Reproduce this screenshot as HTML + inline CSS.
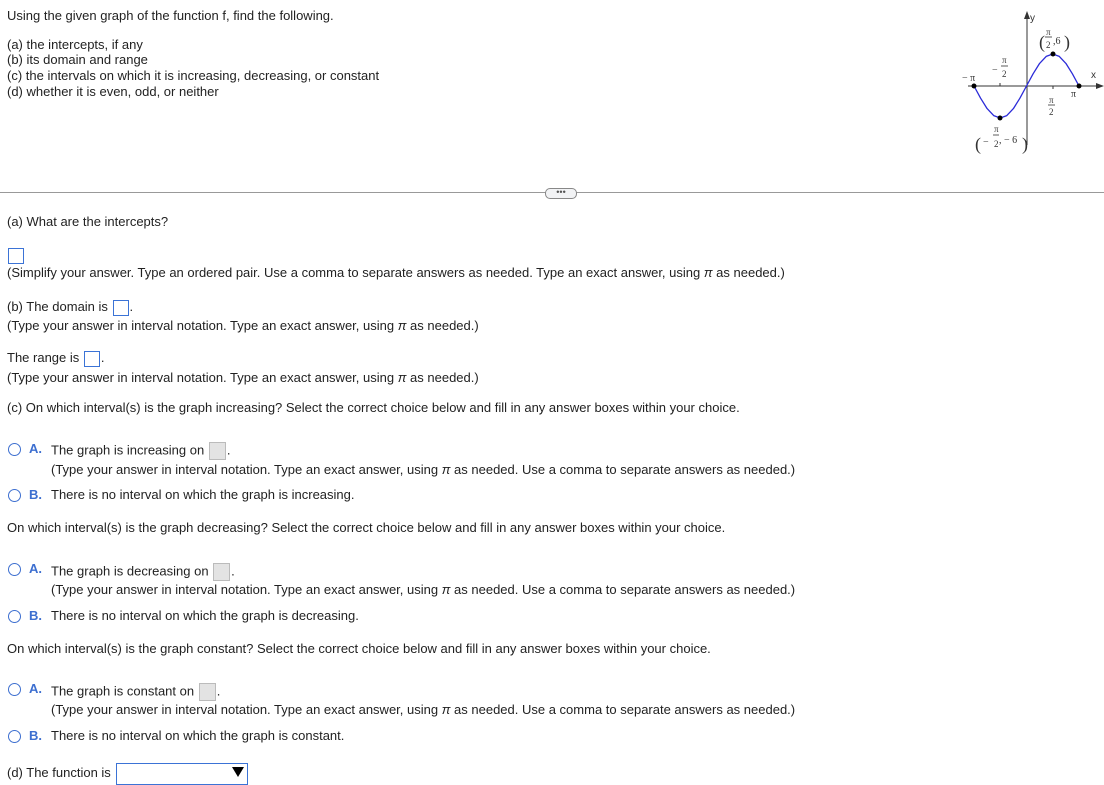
<!DOCTYPE html>
<html><head><meta charset="utf-8"><style>
body{margin:0;width:1104px;height:782px;overflow:hidden;background:#fff;font-family:"Liberation Sans",Arial,sans-serif;font-size:13px;color:#222;position:relative}
.t{position:absolute;line-height:14px;white-space:nowrap}
.box{display:inline-block;width:16px;height:16px;border:1px solid #3b73d6;vertical-align:middle;box-sizing:border-box;margin:0 1px}
.gb{display:inline-block;width:17px;height:18px;border:1px solid #bbb;background:#e3e3e3;vertical-align:middle;box-sizing:border-box;margin:0 1px}
.r{position:absolute;width:13px;height:13px;border:1.4px solid #3d6fd0;border-radius:50%;box-sizing:border-box}
.l{position:absolute;color:#3d6fd0;font-weight:bold;font-size:13px;line-height:14px}
</style></head><body>
<div class="t" style="left:7px;top:9px">Using the given graph of the function f, find the following.</div>
<div class="t" style="left:7px;top:38px">(a) the intercepts, if any</div>
<div class="t" style="left:7px;top:53px">(b) its domain and range</div>
<div class="t" style="left:7px;top:69px">(c) the intervals on which it is increasing, decreasing, or constant</div>
<div class="t" style="left:7px;top:85px">(d) whether it is even, odd, or neither</div>

<svg style="position:absolute;left:950px;top:5px" width="154" height="155" viewBox="0 0 154 155" font-family="Liberation Serif,serif" font-size="10" fill="#333">
<line x1="18" y1="81" x2="150" y2="81" stroke="#333" stroke-width="1"/>
<polygon points="154,81 146,78 146,84" fill="#333"/>
<line x1="77" y1="10" x2="77" y2="140" stroke="#333" stroke-width="1"/>
<polygon points="77,6 74,14 80,14" fill="#333"/>
<line x1="50" y1="78" x2="50" y2="81" stroke="#333"/><line x1="103" y1="81" x2="103" y2="84" stroke="#333"/>
<polyline points="24,81 30.6,93.2 37.1,103.6 43.7,110.6 50.25,113 56.8,110.6 63.4,103.6 69.9,93.2 76.5,81 83.1,68.8 89.6,58.4 96.2,51.4 102.75,49 109.3,51.4 115.9,58.4 122.4,68.8 129,81" fill="none" stroke="#2b2bd8" stroke-width="1.3" stroke-linejoin="round"/>
<circle cx="24" cy="81" r="2.5" fill="#000"/><circle cx="50" cy="113" r="2.5" fill="#000"/><circle cx="103" cy="49" r="2.5" fill="#000"/><circle cx="129" cy="81" r="2.5" fill="#000"/>
<text x="80" y="16" font-family="Liberation Sans,sans-serif">y</text>
<text x="141" y="73" font-family="Liberation Sans,sans-serif">x</text>
<text x="12" y="76">− π</text>
<text x="42" y="68">−</text><text x="52" y="58" font-size="9">π</text><line x1="51" y1="61" x2="58" y2="61" stroke="#333" stroke-width=".8"/><text x="52" y="72" font-size="9">2</text>
<text x="99" y="98" font-size="9">π</text><line x1="98" y1="100" x2="105" y2="100" stroke="#333" stroke-width=".8"/><text x="99" y="110" font-size="9">2</text>
<text x="121" y="92">π</text>
<text x="89" y="43" font-size="18">(</text><text x="96" y="30" font-size="9">π</text><line x1="95" y1="32" x2="102" y2="32" stroke="#333" stroke-width=".8"/><text x="96" y="43" font-size="9">2</text><text x="103" y="39">,6</text><text x="114" y="43" font-size="18">)</text>
<text x="25" y="145" font-size="18">(</text><text x="33" y="140">−</text><text x="44" y="127" font-size="9">π</text><line x1="43" y1="130" x2="49" y2="130" stroke="#333" stroke-width=".8"/><text x="44" y="142" font-size="9">2</text><text x="49" y="138">, − 6</text><text x="72" y="145" font-size="18">)</text>
</svg>

<div style="position:absolute;left:0;top:192px;width:1104px;height:1px;background:#999"></div>
<div style="position:absolute;left:545px;top:188px;width:30px;height:9px;border:1px solid #888;border-radius:5px;background:#f2f3f5;font-size:9px;line-height:6px;text-align:center;color:#555">•••</div>

<div class="t" style="left:7px;top:215px">(a) What are the intercepts?</div>
<div style="position:absolute;left:8px;top:248px;width:16px;height:16px;border:1px solid #3b73d6;box-sizing:border-box"></div>
<div class="t" style="left:7px;top:266px">(Simplify your answer. Type an ordered pair. Use a comma to separate answers as needed. Type an exact answer, using <i>π</i> as needed.)</div>
<div class="t" style="left:7px;top:299px;line-height:16px">(b) The domain is <span class="box"></span>.</div>
<div class="t" style="left:7px;top:319px">(Type your answer in interval notation. Type an exact answer, using <i>π</i> as needed.)</div>
<div class="t" style="left:7px;top:350px;line-height:16px">The range is <span class="box"></span>.</div>
<div class="t" style="left:7px;top:371px">(Type your answer in interval notation. Type an exact answer, using <i>π</i> as needed.)</div>
<div class="t" style="left:7px;top:401px">(c) On which interval(s) is the graph increasing? Select the correct choice below and fill in any answer boxes within your choice.</div>

<div class="r" style="left:8px;top:443px"></div><div class="l" style="left:29px;top:442px">A.</div>
<div class="t" style="left:51px;top:442px;line-height:16px">The graph is increasing on <span class="gb"></span>.</div>
<div class="t" style="left:51px;top:463px">(Type your answer in interval notation. Type an exact answer, using <i>π</i> as needed. Use a comma to separate answers as needed.)</div>
<div class="r" style="left:8px;top:489px"></div><div class="l" style="left:29px;top:488px">B.</div>
<div class="t" style="left:51px;top:488px">There is no interval on which the graph is increasing.</div>
<div class="t" style="left:7px;top:521px">On which interval(s) is the graph decreasing? Select the correct choice below and fill in any answer boxes within your choice.</div>

<div class="r" style="left:8px;top:563px"></div><div class="l" style="left:29px;top:562px">A.</div>
<div class="t" style="left:51px;top:563px;line-height:16px">The graph is decreasing on <span class="gb"></span>.</div>
<div class="t" style="left:51px;top:583px">(Type your answer in interval notation. Type an exact answer, using <i>π</i> as needed. Use a comma to separate answers as needed.)</div>
<div class="r" style="left:8px;top:610px"></div><div class="l" style="left:29px;top:609px">B.</div>
<div class="t" style="left:51px;top:609px">There is no interval on which the graph is decreasing.</div>
<div class="t" style="left:7px;top:642px">On which interval(s) is the graph constant? Select the correct choice below and fill in any answer boxes within your choice.</div>

<div class="r" style="left:8px;top:683px"></div><div class="l" style="left:29px;top:682px">A.</div>
<div class="t" style="left:51px;top:683px;line-height:16px">The graph is constant on <span class="gb"></span>.</div>
<div class="t" style="left:51px;top:703px">(Type your answer in interval notation. Type an exact answer, using <i>π</i> as needed. Use a comma to separate answers as needed.)</div>
<div class="r" style="left:8px;top:730px"></div><div class="l" style="left:29px;top:729px">B.</div>
<div class="t" style="left:51px;top:729px">There is no interval on which the graph is constant.</div>

<div class="t" style="left:7px;top:766px">(d) The function is</div>
<div style="position:absolute;left:116px;top:763px;width:132px;height:22px;border:1px solid #3b73d6;box-sizing:border-box"></div>
<div style="position:absolute;left:232px;top:767px;width:0;height:0;border-left:6px solid transparent;border-right:6px solid transparent;border-top:10px solid #000"></div>
</body></html>
